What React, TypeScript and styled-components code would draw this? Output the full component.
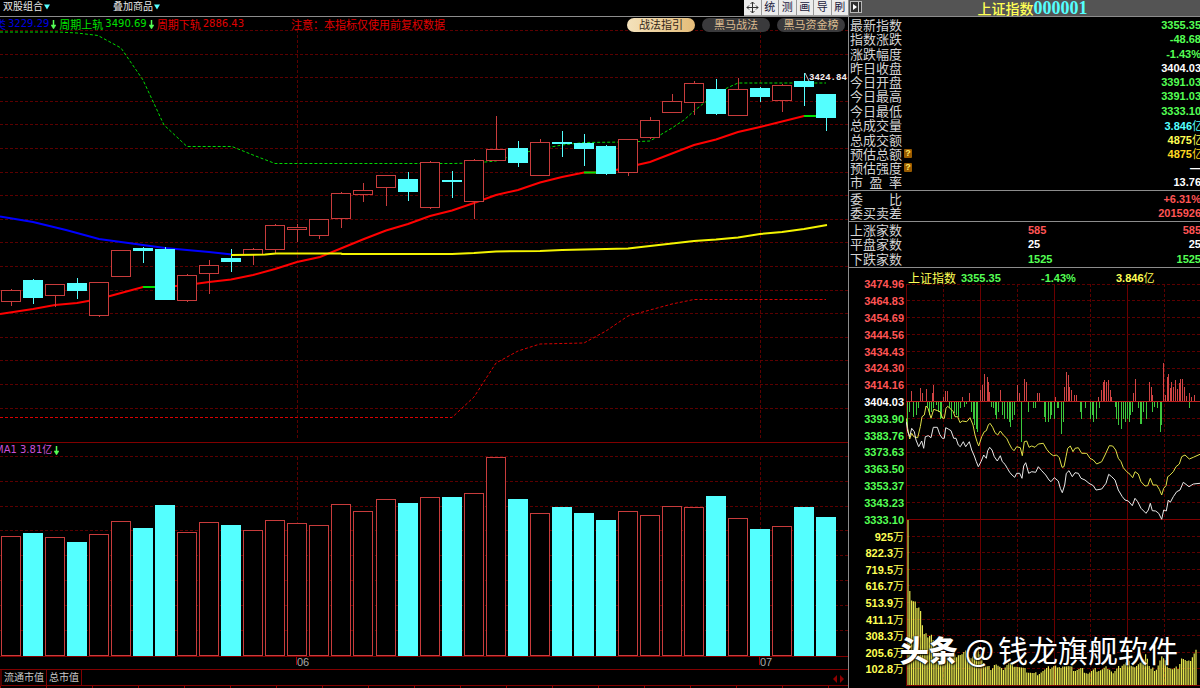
import React from "react";
import styled, { createGlobalStyle, css } from "styled-components";

const Global = createGlobalStyle`
  * { box-sizing: border-box; }
  body {
    margin: 0;
    background: #000;
    color: #d8d8d8;
    font-family: "Liberation Sans", "Noto Sans CJK SC", sans-serif;
    overflow: hidden;
  }
  button {
    margin: 0;
    padding: 0;
    border: 0;
    background: none;
    font: inherit;
    color: inherit;
    white-space: nowrap;
    cursor: pointer;
  }
`;

const C = {
  up: "#ff5454",
  down: "#54ff54",
  cyan: "#54ffff",
  yellow: "#ffff54",
  gold: "#ffd820",
  white: "#ffffff",
  frame: "#800000",
  grid: "#5c0000",
  candle: "#c83c3c",
};

/* ---------- page frame ---------- */

const Page = styled.div`
  display: grid;
  grid-template-columns: minmax(0, 1fr) 352px;
  min-height: 100vh;
`;

const Left = styled.main`
  display: flex;
  flex-direction: column;
  min-width: 0;
`;

const Right = styled.aside`
  display: flex;
  flex-direction: column;
  position: relative;
  border-left: 1px solid #8c8c8c;
  overflow: hidden;
`;

/* ---------- left: top bar ---------- */

const TopBar = styled.header`
  display: flex;
  height: 17px;
  border-bottom: 1px solid #8c8c8c;
`;

const Menus = styled.nav`
  display: flex;
  flex: 1;
  gap: 62px;
  padding-left: 3px;
`;

const MenuButton = styled.button`
  display: flex;
  align-items: center;
  height: 13px;
  font-size: 10px;
  line-height: 13px;
  color: #e8e8e8;
`;

const Tools = styled.div`
  display: grid;
  grid-template-columns: repeat(6, 1fr);
  width: 104px;
  background: #9a9a9a;
  gap: 1px;
`;

const ToolButton = styled.button`
  display: flex;
  align-items: center;
  justify-content: center;
  height: 15px;
  background: #ececec;
  color: #20203c;
  font-size: 11px;
  line-height: 15px;
`;

/* ---------- left: charts ---------- */

const Panel = styled.section`
  display: grid;
  grid-template-columns: minmax(0, 1fr);
  > * {
    grid-area: 1 / 1;
  }
`;

const Plot = styled.svg<{ $h: number }>`
  display: block;
  width: 100%;
  height: ${(p) => p.$h}px;
`;

const LegendRow = styled.div`
  display: flex;
  justify-content: space-between;
  align-items: flex-start;
  z-index: 1;
  height: 16px;
  overflow: hidden;
`;

const Legend = styled.div`
  display: flex;
  align-items: center;
  height: 14px;
  margin-left: -5px;
  font-family: "DejaVu Sans", "Noto Sans CJK SC", sans-serif;
  font-size: 10px;
  line-height: 14px;
  white-space: nowrap;
`;

const VolumeLegend = styled(Legend)`
  height: 16px;
`;

const LegendItem = styled.span<{ $color: string }>`
  display: flex;
  align-items: center;
  gap: 2px;
  margin-right: 3px;
  color: ${(p) => p.$color};
`;

const Cjk = styled.span`
  font-family: "Noto Sans CJK SC", sans-serif;
  font-size: 11px;
`;

const Notice = styled.strong`
  margin-left: 44px;
  font-family: "Noto Sans CJK SC", sans-serif;
  font-size: 11px;
  font-weight: 400;
  color: #e00000;
`;

const Pills = styled.div`
  display: flex;
  gap: 7px;
  padding: 1px 3px 0 0;
`;

const Pill = styled.button<{ $active?: boolean }>`
  width: 68px;
  height: 14px;
  border-radius: 7px;
  font-size: 11px;
  line-height: 14px;
  ${(p) =>
    p.$active
      ? css`
          background: linear-gradient(90deg, #f4e2bc, #e4bc78);
          color: #33261a;
        `
      : css`
          background: #3a3a3c;
          color: #dcbc90;
        `}
`;

const DateAxis = styled.div`
  display: grid;
  grid-template-columns: 296fr 463fr 89fr;
  height: 13px;
  border-bottom: 1px solid ${C.frame};
  font-size: 11px;
  line-height: 11px;
  color: #a8a8a8;
`;

const DateMark = styled.span<{ $column: number }>`
  grid-column: ${(p) => p.$column};
  height: 8px;
  border-left: 1px solid #a00000;
`;

const BottomTabs = styled.footer`
  display: flex;
  justify-content: space-between;
  height: 16px;
  border-bottom: 1px solid ${C.frame};
  border-left: 2px solid #500000;
`;

const TabGroup = styled.div`
  display: flex;
`;

const Tab = styled.button`
  padding: 0 2px;
  border-right: 1px solid ${C.frame};
  font-size: 10px;
  line-height: 15px;
  color: #c8c8c8;
`;

const Pager = styled.div`
  display: flex;
  align-items: center;
  gap: 3px;
  padding-right: 4px;
`;

const Ruler = styled.div`
  height: 2px;
  background: repeating-linear-gradient(90deg, #900000 0 1px, #000 1px 46px);
`;

/* ---------- right: quote board ---------- */

const Title = styled.h1`
  display: flex;
  align-items: center;
  margin: 0;
  height: 17px;
  border-bottom: 1px solid #8c8c8c;
  background: #545454;
  font-size: 14px;
  line-height: 16px;
  font-weight: 400;
`;

const TitleText = styled.span`
  display: flex;
  flex: 1;
  align-items: center;
  justify-content: center;
  padding-left: 2px;
  font-family: "Noto Sans CJK SC", sans-serif;
  font-weight: 500;
  color: ${C.yellow};
`;

const Code = styled.span`
  font-family: "Liberation Serif", serif;
  font-size: 18px;
  font-weight: 700;
  color: ${C.cyan};
`;

const Quotes = styled.dl<{ $h: number }>`
  display: grid;
  grid-auto-rows: 1fr;
  margin: 0;
  height: ${(p) => p.$h}px;
  padding: 1px 0;
  border-bottom: 1px solid #8c8c8c;
`;

const Row = styled.div`
  display: grid;
  grid-template-columns: 178px 1fr auto;
  align-items: center;
  min-height: 0;
  padding-left: 1px;
  line-height: 14px;
`;

const Label = styled.dt`
  display: flex;
  align-items: center;
  gap: 2px;
  height: 14px;
  font-family: "Noto Sans CJK SC", sans-serif;
  font-size: 13px;
  color: #d4d4d4;
`;

const LabelText = styled.span`
  width: 52px;
  white-space: nowrap;
  text-align: justify;
  text-align-last: justify;
`;

const Help = styled.button`
  width: 8px;
  height: 9px;
  border-radius: 1px;
  background: #9a5c00;
  color: #ffe860;
  font: 700 9px/9px "Liberation Sans", sans-serif;
`;

const Value = styled.dd<{ $color: string; $bleed?: boolean }>`
  margin: 0;
  margin-right: ${(p) => (p.$bleed ? "-3px" : "-1px")};
  font-size: 11px;
  font-weight: 700;
  white-space: nowrap;
  color: ${(p) => p.$color};
`;

const Unit = styled.span`
  font-family: "Noto Sans CJK SC", sans-serif;
  font-weight: 400;
`;

/* ---------- right: intraday chart ---------- */

const Intraday = styled.section`
  display: grid;
  grid-template-columns: 57px minmax(0, 1fr);
`;

const Axis = styled.div`
  padding: 8px 2px 0 0;
`;

const Ticks = styled.div<{ $h: number }>`
  display: grid;
  grid-auto-rows: 1fr;
  align-items: center;
  height: ${(p) => p.$h}px;
  font-size: 11px;
  line-height: 14px;
  font-weight: 700;
  text-align: right;
`;

const Tick = styled.span<{ $color: string }>`
  color: ${(p) => p.$color};
`;

const IntradayHead = styled.div`
  display: grid;
  grid-template-columns: 53px 80px 75px 1fr;
  align-items: center;
  height: 16px;
  padding: 2px 0 0 2px;
  font-size: 11px;
  line-height: 14px;
  font-weight: 700;
  color: ${C.down};
`;

const IntradayName = styled.span`
  font-family: "Noto Sans CJK SC", sans-serif;
  font-size: 12px;
  font-weight: 400;
  color: ${C.yellow};
`;

const Watermark = styled.div`
  position: absolute;
  right: 22px;
  bottom: 17px;
  display: flex;
  align-items: center;
  font-family: "Noto Sans CJK SC", sans-serif;
  font-size: 30px;
  line-height: 44px;
  color: #fff;
  white-space: nowrap;
  text-shadow: 1px 1px 2px #000, -1px 0 2px rgba(0, 0, 0, 0.7);
`;

const Brand = styled.strong`
  margin-right: 7px;
  font-size: 29px;
  font-weight: 900;
`;

const At = styled.span`
  margin-right: 4px;
  font-size: 31px;
`;

/* ---------- data ---------- */

type Candle = [kind: "r" | "c", top: number, bottom: number, high: number, low: number, volume: number];

const candles: Candle[] = [
  ["r", 290, 301, 289, 306, 536],
  ["c", 280, 298, 279, 304, 533],
  ["r", 284, 295, 284, 307, 537],
  ["c", 283, 291, 278, 299, 542],
  ["r", 282, 315, 282, 317, 534],
  ["r", 250, 276, 250, 277, 521],
  ["c", 248, 251, 247, 263, 528],
  ["c", 249, 300, 247, 300, 505],
  ["r", 275, 300, 274, 302, 532],
  ["r", 265, 273, 260, 294, 522],
  ["c", 258, 262, 249, 272, 525],
  ["r", 249, 254, 248, 265, 530],
  ["r", 225, 249, 224, 253, 520],
  ["r", 227, 229, 224, 242, 523],
  ["r", 219, 235, 219, 239, 525],
  ["r", 193, 218, 192, 228, 504],
  ["r", 190, 194, 183, 202, 511],
  ["r", 175, 187, 175, 206, 499],
  ["c", 179, 192, 172, 201, 503],
  ["r", 162, 207, 161, 209, 497],
  ["c", 180, 182, 171, 198, 497],
  ["r", 160, 201, 159, 219, 493],
  ["r", 149, 160, 116, 161, 457],
  ["c", 148, 163, 141, 167, 499],
  ["r", 142, 175, 139, 176, 513],
  ["c", 142, 144, 131, 157, 507],
  ["c", 143, 149, 134, 166, 513],
  ["c", 146, 174, 145, 175, 520],
  ["r", 139, 172, 139, 176, 511],
  ["r", 120, 137, 117, 139, 515],
  ["r", 101, 112, 94, 113, 506],
  ["r", 83, 102, 81, 115, 507],
  ["c", 89, 114, 79, 115, 496],
  ["r", 89, 115, 78, 115, 518],
  ["c", 88, 97, 87, 102, 529],
  ["r", 85, 100, 84, 112, 526],
  ["c", 81, 87, 73, 106, 507],
  ["c", 94, 118, 94, 131, 517],
];

const candleX = (i: number) => Math.round(11 + i * 22.03);

const upperRail =
  "0,32 58,32 77,33 98,35.5 121,48 143,80 164,125 187,146.5 232,146.5 253,155 275,163.5 452,163.5 474,163 496,161 518,154 540,149 562,145 584,142.5 628,142 650,141 672,128 684,120 694,111 704,103 716,95 727,88 738,83 826,83";
const lowerRail =
  "0,417.5 452,417.5 474,397 496,363 518,351 540,344 584,343 606,331 628,316 650,310 672,304 694,299.5 826,299.5";
const blueLine = "0,216.5 33,222 66,230 99,239 121,242 143,245 165,248 187,250 209,252 232,254.5";
const yellowLine =
  "231,255 265,254.5 276,253.5 341,253.5 342,254 452,254 474,253 496,251.5 540,251 562,250 606,249 628,248.5 650,246 672,243.5 694,241 716,239.5 738,237.5 760,234 782,232 804,229 827,225";
const redLine =
  "0,314 33,309 55,305 77,303 99,299 121,293 143,287 165,287 187,285 209,282 231,279.5 253,275 275,269 297,262 320,257 342,248 364,239 386,230.5 408,224 430,216 452,210.5 474,203 496,195 518,190 540,182.5 562,177 584,172.5 606,172.5 628,167 650,162 672,153.5 694,145 716,139.5 738,132 760,127 782,121.5 804,116 826,116";
const flatMarks = [
  [143, 287],
  [584, 172.5],
  [804, 116],
];

/* Intraday series are kept on a grid of thirds: (x, y) pairs divided by three. */
const strengthUp = [
  200, 378, 225, 368, 231, 385, 243, 373, 262, 385, 266, 360, 296, 395, 302, 378, 307, 378, 352, 397, 373, 385, 405,
  375, 412, 360, 417, 328, 426, 335, 431, 352, 434, 380, 466, 375, 516, 360, 523, 385, 538, 343, 543, 352, 578, 385,
  583, 385, 631, 397, 659, 365, 664, 322, 669, 330, 674, 365, 678, 375, 688, 390, 693, 390, 761, 397, 769, 375, 774,
  352, 779, 345, 785, 350, 790, 345, 795, 375, 800, 397, 866, 385, 870, 343, 913, 352, 919, 365, 923, 390, 956, 295,
  962, 390, 967, 335, 970, 328, 975, 370, 980, 352, 986, 365, 992, 345, 997, 372, 1002, 355, 1007, 343, 1012, 343,
  1017, 365, 1023, 392, 1033, 385, 1038, 397, 1047, 390,
];
const strengthDown = [
  188, 490, 194, 442, 205, 455, 213, 450, 220, 428, 247, 430, 252, 450, 258, 440, 264, 428, 275, 420, 280, 440, 285,
  463, 290, 460, 312, 430, 320, 463, 328, 445, 333, 450, 341, 455, 346, 430, 357, 425, 364, 418, 379, 440, 384, 463,
  389, 480, 393, 492, 397, 500, 440, 425, 445, 430, 450, 450, 455, 463, 460, 440, 473, 450, 479, 463, 486, 463, 492,
  470, 497, 487, 502, 465, 507, 450, 530, 530, 549, 440, 565, 430, 572, 430, 597, 455, 602, 470, 609, 470, 615, 463,
  620, 450, 628, 463, 636, 430, 641, 430, 649, 508, 654, 470, 705, 440, 710, 463, 722, 430, 736, 463, 741, 450, 746,
  470, 753, 463, 763, 430, 810, 425, 815, 463, 821, 480, 828, 492, 834, 463, 840, 470, 846, 463, 852, 470, 857, 450,
  862, 440, 880, 430, 885, 478, 890, 478, 896, 440, 903, 463, 923, 440, 929, 425, 936, 430, 946, 500, 950, 480, 1033,
  430,
];
const averageLine = [
  184, 460, 188, 490, 194, 522, 200, 505, 206, 515, 218, 518, 226, 485, 231, 455, 238, 450, 243, 423, 249, 430, 258,
  460, 266, 433, 278, 437, 285, 440, 293, 460, 298, 460, 303, 430, 308, 424, 318, 433, 325, 440, 330, 455, 338, 455,
  345, 473, 352, 468, 365, 470, 375, 458, 384, 480, 390, 510, 396, 530, 401, 543, 410, 515, 418, 500, 424, 497, 430,
  480, 435, 475, 443, 487, 450, 503, 458, 510, 466, 498, 475, 510, 485, 520, 492, 535, 500, 550, 507, 557, 515, 545,
  526, 548, 532, 572, 538, 530, 545, 528, 552, 547, 560, 543, 570, 547, 580, 537, 595, 535, 605, 553, 615, 565, 625,
  572, 635, 570, 643, 578, 651, 607, 657, 605, 663, 575, 668, 550, 676, 543, 684, 560, 690, 550, 700, 548, 710, 565,
  725, 565, 735, 580, 745, 585, 755, 597, 770, 590, 780, 570, 793, 542, 803, 543, 812, 555, 820, 580, 828, 590, 835,
  608, 845, 620, 855, 628, 863, 638, 870, 620, 880, 627, 888, 650, 900, 663, 908, 662, 916, 640, 924, 660, 935, 660,
  943, 673, 950, 690, 956, 670, 963, 662, 968, 635, 973, 632, 985, 620, 993, 605, 1003, 597, 1010, 575, 1020, 570,
  1033, 582, 1045, 577, 1065, 568,
];
const priceLine = [
  184, 470, 188, 500, 194, 515, 200, 490, 208, 500, 213, 525, 221, 545, 230, 528, 236, 550, 241, 515, 250, 512, 258,
  518, 265, 487, 277, 487, 284, 508, 292, 520, 298, 520, 302, 488, 310, 492, 318, 497, 326, 520, 333, 520, 340, 540,
  346, 545, 355, 530, 362, 545, 373, 530, 380, 555, 388, 573, 394, 590, 400, 605, 408, 590, 416, 570, 424, 580, 428,
  557, 434, 547, 441, 555, 448, 575, 457, 588, 466, 572, 472, 590, 480, 598, 487, 610, 494, 622, 501, 630, 509, 637,
  515, 625, 524, 625, 531, 640, 536, 603, 542, 593, 551, 625, 560, 620, 572, 622, 580, 605, 590, 617, 602, 630, 612,
  645, 618, 650, 628, 638, 640, 648, 646, 670, 652, 683, 659, 660, 664, 625, 672, 617, 682, 635, 690, 623, 700, 625,
  708, 640, 720, 645, 732, 655, 745, 662, 753, 675, 770, 672, 783, 655, 791, 628, 800, 635, 810, 645, 820, 675, 832,
  695, 840, 705, 850, 708, 862, 722, 870, 700, 878, 710, 888, 730, 903, 745, 910, 735, 916, 715, 922, 737, 932, 738,
  941, 745, 950, 763, 956, 735, 964, 738, 970, 705, 976, 712, 985, 695, 995, 680, 1005, 675, 1015, 652, 1032, 665,
  1045, 657, 1065, 655,
];
const turnover = [
  186, 330, 189, 15, 194, 228, 198, 250, 203, 268, 208, 245, 214, 280, 220, 285, 226, 275, 231, 320, 237, 355, 243,
  355, 247, 370, 260, 365, 280, 385, 300, 420, 330, 425, 340, 418, 350, 420, 360, 410, 380, 430, 400, 400, 420, 455,
  440, 460, 450, 445, 470, 465, 490, 445, 510, 450, 530, 460, 550, 470, 570, 478, 590, 470, 610, 460, 630, 450, 640,
  465, 650, 450, 670, 455, 690, 465, 710, 462, 730, 475, 750, 465, 770, 465, 790, 455, 805, 475, 830, 450, 850, 440,
  870, 455, 890, 445, 903, 412, 915, 465, 935, 460, 950, 425, 970, 455, 985, 465, 1000, 455, 1010, 428, 1030, 445,
  1053, 405,
];

const pairs = (flat: number[]) =>
  flat.reduce<[number, number][]>((out, v, i) => {
    if (i % 2 === 0) out.push([v, flat[i + 1]]);
    return out;
  }, []);

const toPoints = (flat: number[]) =>
  pairs(flat)
    .map(([x, y]) => `${(845 + x / 3).toFixed(1)},${(265 + y / 3).toFixed(1)}`)
    .join(" ");

const toBars = (flat: number[]) =>
  pairs(flat)
    .map(([x, y]) => `M${Math.floor(845 + x / 3) + 0.5} 402V${Math.round(265 + y / 3)}`)
    .join("");

const turnoverPath = (() => {
  const pts = pairs(turnover);
  let d = "";
  let seg = 0;
  for (let x = 189, i = 0; x <= 1054; x += 5.4, i++) {
    while (seg < pts.length - 2 && pts[seg + 1][0] < x) seg++;
    const [x0, y0] = pts[seg];
    const [x1, y1] = pts[seg + 1];
    const base = i === 0 ? 15 : x < 196 ? 228 : y0 + ((y1 - y0) * (x - x0)) / (x1 - x0);
    const wobble = i < 3 ? 0 : ((i * 37) % 13) - 6;
    d += `M${(845 + x / 3).toFixed(1)} 685V${(515 + (base + wobble) / 3).toFixed(1)}`;
  }
  return d;
})();

const range = (n: number) => Array.from({ length: n }, (_, i) => i);

const prices = [
  "3474.96", "3464.83", "3454.69", "3444.56", "3434.43", "3424.30", "3414.16", "3404.03",
  "3393.90", "3383.76", "3373.63", "3363.50", "3353.37", "3343.23", "3333.10",
];
const amounts = ["925", "822.3", "719.5", "616.7", "513.9", "411.1", "308.3", "205.6", "102.8"];

type Quote = { label: string; value: string; color: string; unit?: string; help?: boolean; mid?: string };

const quotes: Quote[] = [
  { label: "最新指数", value: "3355.35", color: C.down },
  { label: "指数涨跌", value: "-48.68", color: C.down },
  { label: "涨跌幅度", value: "-1.43%", color: C.down },
  { label: "昨日收盘", value: "3404.03", color: C.white },
  { label: "今日开盘", value: "3391.03", color: C.down },
  { label: "今日最高", value: "3391.03", color: C.down },
  { label: "今日最低", value: "3333.10", color: C.down },
  { label: "总成交量", value: "3.846", unit: "亿", color: C.cyan },
  { label: "总成交额", value: "4875", unit: "亿", color: C.yellow },
  { label: "预估总额", value: "4875", unit: "亿", color: C.gold, help: true },
  { label: "预估强度", value: "—", color: C.white, help: true },
  { label: "市 盈 率", value: "13.76", color: C.white },
];
const orders: Quote[] = [
  { label: "委 比", value: "+6.31%", color: C.up },
  { label: "委买卖差", value: "2015926", color: C.up },
];
const breadth: Quote[] = [
  { label: "上涨家数", value: "585", mid: "585", color: C.up },
  { label: "平盘家数", value: "25", mid: "25", color: C.white },
  { label: "下跌家数", value: "1525", mid: "1525", color: C.down },
];

/* ---------- pieces ---------- */

const DownTriangle = () => (
  <svg width="8" height="6" viewBox="0 0 8 6" aria-hidden="true">
    <path d="M1 0.5H7L4 5.5Z" fill={C.cyan} />
  </svg>
);

const DownArrow = () => (
  <svg width="5" height="9" viewBox="0 0 5 9" aria-hidden="true">
    <path d="M2 0H3V5H5L2.5 9L0 5H2Z" fill={C.down} stroke={C.down} strokeWidth="0.5" />
  </svg>
);

const QuoteBlock = ({ rows, height }: { rows: Quote[]; height: number }) => (
  <Quotes $h={height}>
    {rows.map((q) => (
      <Row key={q.label}>
        <Label>
          <LabelText>{q.label}</LabelText>
          {q.help && <Help aria-label={`${q.label}说明`}>?</Help>}
        </Label>
        <Value $color={q.color}>{q.mid}</Value>
        <Value $color={q.color} $bleed={!!q.unit}>
          {q.value}
          {q.unit && <Unit>{q.unit}</Unit>}
        </Value>
      </Row>
    ))}
  </Quotes>
);

const PriceChart = () => (
  <Plot $h={425} viewBox="0 17 848 425" preserveAspectRatio="none" role="img" aria-label="上证指数 K线图">
    <g stroke={C.grid} strokeDasharray="3 2" fill="none">
      {range(17).map((k) => (
        <path key={k} d={`M0 ${Math.floor(30.5 + k * 23.6) + 0.5}H848`} />
      ))}
      <path d="M297.5 30V438M760.5 30V438" />
    </g>
    <g fill="none">
      <polyline points={upperRail} stroke="#00d800" strokeDasharray="3 2" />
      <polyline points={lowerRail} stroke="#d80000" strokeDasharray="3 2" />
      <polyline points={blueLine} stroke="#0000ff" strokeWidth="2" />
      <polyline points={redLine} stroke="#ff0000" strokeWidth="2" />
      {flatMarks.map(([x, y]) => (
        <path key={x} d={`M${x} ${y}h22`} stroke="#00e000" strokeWidth="2" />
      ))}
    </g>
    {candles.map(([kind, top, bottom, high, low], i) => {
      const x = candleX(i);
      const color = kind === "r" ? C.candle : C.cyan;
      return (
        <g key={i}>
          <path d={`M${x + 0.5} ${high}V${low}`} stroke={color} />
          {kind === "r" ? (
            <rect x={x - 9.5} y={top + 0.5} width="19" height={bottom - top} fill="#000" stroke={color} />
          ) : (
            <rect x={x - 10} y={top} width="20" height={bottom - top} fill={color} />
          )}
        </g>
      );
    })}
    <polyline points={yellowLine} stroke="#f4f400" strokeWidth="2" fill="none" />
    <path d="M805 73L809 81" stroke="#c8c8c8" />
    <text x="809" y="80" fill="#f0f0f0" fontFamily="Liberation Mono, monospace" fontSize="9" fontWeight="700">
      3424.84
    </text>
  </Plot>
);

const VolumeChart = () => (
  <Plot $h={215} viewBox="0 442 848 215" preserveAspectRatio="none" role="img" aria-label="成交量">
    <g stroke={C.grid} strokeDasharray="3 2">
      {range(8).map((k) => (
        <path key={k} d={`M0 ${Math.floor(456.5 + k * 24.8) + 0.5}H848`} />
      ))}
      <path d="M297.5 457V656M760.5 457V656" />
    </g>
    {candles.map(([kind, , , , , v], i) => {
      const x = candleX(i);
      return kind === "r" ? (
        <rect key={i} x={x - 9.5} y={v + 0.5} width="19" height={655 - v} fill="#000" stroke={C.candle} />
      ) : (
        <rect key={i} x={x - 10} y={v} width="20" height={656 - v} fill={C.cyan} />
      );
    })}
    <path d="M0 442.5H848M0 656.5H848" stroke={C.frame} />
  </Plot>
);

const IntradayChart = () => (
  <Plot $h={404} viewBox="906 284 294 404" preserveAspectRatio="none" role="img" aria-label="上证指数分时图">
    <g stroke={C.grid} fill="none">
      {range(14).map((k) => (
        <path key={k} d={`M907 ${Math.floor(284 + k * 16.8) + 0.5}H1200`} strokeDasharray="3 2" />
      ))}
      {range(9).map((k) => (
        <path key={k} d={`M907 ${Math.floor(536 + k * 16.6) + 0.5}H1200`} strokeDasharray="3 2" />
      ))}
      <path d="M943.5 284V685M1017.5 284V685M1090.5 284V685M1164.5 284V685" strokeDasharray="3 2" />
      <path d="M906.5 284V685M980.5 284V685M1054.5 284V685M1127.5 284V685" stroke="#6c0000" />
      <path d="M906 519.5H1200M906 685.5H1200" stroke={C.frame} />
    </g>
    <path d={toBars(strengthUp)} stroke="#d04444" />
    <path d={toBars(strengthDown)} stroke="#3cc83c" />
    <path d="M906 401.5H1200" stroke="#c02020" />
    <path d={turnoverPath} stroke="#e4e44c" strokeWidth="1.2" />
    <polyline points={toPoints(averageLine)} fill="none" stroke="#e0e048" />
    <polyline points={toPoints(priceLine)} fill="none" stroke="#e8e8e8" />
  </Plot>
);

export default function App() {
  return (
    <>
      <Global />
      <Page>
        <Left>
          <TopBar>
            <Menus>
              <MenuButton>
                双股组合
                <DownTriangle />
              </MenuButton>
              <MenuButton>
                叠加商品
                <DownTriangle />
              </MenuButton>
            </Menus>
            <Tools>
              <ToolButton aria-label="移动">
                <svg width="13" height="13" viewBox="0 0 13 13" fill="none" stroke="#303030" aria-hidden="true">
                  <path d="M6.5 1V12M1 6.5H12M4.5 3L6.5 1L8.5 3M4.5 10L6.5 12L8.5 10M3 4.5L1 6.5L3 8.5M10 4.5L12 6.5L10 8.5" />
                </svg>
              </ToolButton>
              {["统", "测", "画", "导", "刷"].map((t) => (
                <ToolButton key={t}>{t}</ToolButton>
              ))}
            </Tools>
          </TopBar>

          <Panel>
            <PriceChart />
            <LegendRow>
              <Legend>
                <LegendItem $color="#0000e0">
                  <Cjk>类</Cjk>3229.29
                  <DownArrow />
                </LegendItem>
                <LegendItem $color="#00e000">
                  <Cjk>周期上轨</Cjk>3490.69
                  <DownArrow />
                </LegendItem>
                <LegendItem $color="#e00000">
                  <Cjk>周期下轨</Cjk>2886.43
                </LegendItem>
                <Notice>注意：本指标仅使用前复权数据</Notice>
              </Legend>
              <Pills>
                <Pill $active>战法指引</Pill>
                <Pill>黑马战法</Pill>
                <Pill>黑马资金榜</Pill>
              </Pills>
            </LegendRow>
          </Panel>

          <Panel>
            <VolumeChart />
            <LegendRow>
              <VolumeLegend>
                <LegendItem $color="#c850d8">
                  <span>MA1 3.81亿</span>
                  <DownArrow />
                </LegendItem>
              </VolumeLegend>
            </LegendRow>
          </Panel>

          <DateAxis>
            <DateMark $column={2}>06</DateMark>
            <DateMark $column={3}>07</DateMark>
          </DateAxis>
          <BottomTabs>
            <TabGroup>
              <Tab>流通市值</Tab>
              <Tab>总市值</Tab>
            </TabGroup>
            <Pager>
              <button aria-label="向左">
                <svg width="4" height="8" viewBox="0 0 4 8">
                  <path d="M4 0V8L0 4Z" fill="#900000" />
                </svg>
              </button>
              <button aria-label="向右">
                <svg width="4" height="8" viewBox="0 0 4 8">
                  <path d="M0 0V8L4 4Z" fill="#900000" />
                </svg>
              </button>
            </Pager>
          </BottomTabs>
          <Ruler />
        </Left>

        <Right>
          <Title>
            <button aria-label="收起面板">
              <svg width="14" height="14" viewBox="0 0 14 14" aria-hidden="true">
                <rect x="1.5" y="1.5" width="11" height="11" fill="#303030" stroke="#b8b8b8" />
                <path d="M4 4V10L8 7Z" fill="#fff" />
                <path d="M9.5 2V12" stroke="#d0d0d0" />
              </svg>
            </button>
            <TitleText>
              上证指数<Code>000001</Code>
            </TitleText>
          </Title>
          <QuoteBlock rows={quotes} height={174} />
          <QuoteBlock rows={orders} height={31} />
          <QuoteBlock rows={breadth} height={46} />
          <Intraday>
            <Axis>
              <Ticks $h={252}>
                {prices.map((p, i) => (
                  <Tick key={p} $color={i < 7 ? C.up : i === 7 ? C.white : C.down}>
                    {p}
                  </Tick>
                ))}
              </Ticks>
              <Ticks $h={149}>
                {amounts.map((a) => (
                  <Tick key={a} $color={C.yellow}>
                    {a}
                    <Unit>万</Unit>
                  </Tick>
                ))}
              </Ticks>
            </Axis>
            <div>
              <IntradayHead>
                <IntradayName>上证指数</IntradayName>
                <span>3355.35</span>
                <span>-1.43%</span>
                <Tick $color={C.yellow}>
                  3.846<Unit>亿</Unit>
                </Tick>
              </IntradayHead>
              <IntradayChart />
            </div>
          </Intraday>
          <Watermark>
            <Brand>头条</Brand>
            <At>@</At>
            <span>钱龙旗舰软件</span>
          </Watermark>
        </Right>
      </Page>
    </>
  );
}
